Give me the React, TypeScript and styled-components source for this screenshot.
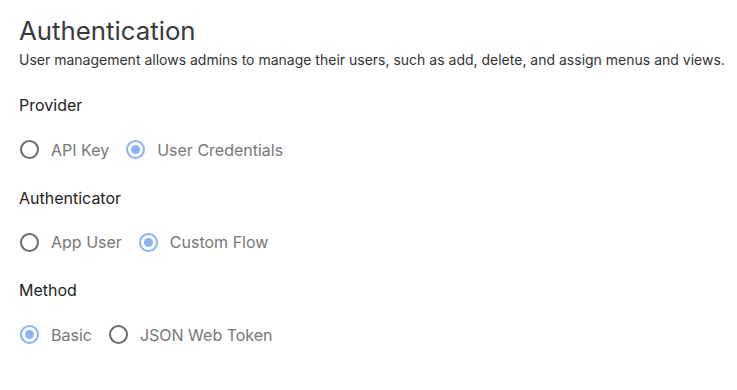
import React, { useState } from "react";
import styled, { createGlobalStyle } from "styled-components";

const Global = createGlobalStyle`
  body { margin: 0; background: #fff; font-family: Inter, "Noto Sans", sans-serif; }
`;

const Page = styled.div`
  padding: 16px 19px;
  display: flex;
  flex-direction: column;
`;

const Title = styled.h1`
  margin: 0;
  font-size: 25.8px;
  line-height: 30px;
  font-weight: 400;
  color: #3a3a3a;
`;

const Desc = styled.p`
  margin: 5px 0 0;
  font-size: 14px;
  line-height: 18px;
  color: #333;
  white-space: nowrap;
`;

const Sections = styled.div`
  display: flex;
  flex-direction: column;
  gap: 28px;
  margin-top: 26px;
`;

const Section = styled.div`
  display: flex;
  flex-direction: column;
`;

const Label = styled.div`
  font-size: 16px;
  line-height: 20px;
  color: #222;
`;

const Options = styled.div`
  display: flex;
  gap: 16px;
  margin-top: 24.5px;
`;

const Option = styled.label`
  display: flex;
  align-items: center;
  gap: 12px;
  cursor: pointer;
  font-size: 16px;
  line-height: 20px;
  color: #777;
`;

const Circle = styled.span<{ $on: boolean }>`
  width: 19px;
  height: 19px;
  margin-left: 1px;
  box-sizing: border-box;
  border-radius: 50%;
  border: 2px solid ${(p) => (p.$on ? "#8ab4f8" : "#6b6b6b")};
  display: flex;
  align-items: center;
  justify-content: center;
  &::after {
    content: "";
    width: 9px;
    height: 9px;
    border-radius: 50%;
    background: ${(p) => (p.$on ? "#8ab4f8" : "transparent")};
  }
`;

type Group = { label: string; options: string[]; initial: string };

const groups: Group[] = [
  { label: "Provider", options: ["API Key", "User Credentials"], initial: "User Credentials" },
  { label: "Authenticator", options: ["App User", "Custom Flow"], initial: "Custom Flow" },
  { label: "Method", options: ["Basic", "JSON Web Token"], initial: "Basic" },
];

function RadioGroup({ g }: { g: Group }) {
  const [value, setValue] = useState(g.initial);
  return (
    <Section>
      <Label>{g.label}</Label>
      <Options>
        {g.options.map((o) => (
          <Option key={o} onClick={() => setValue(o)}>
            <Circle $on={value === o} />
            {o}
          </Option>
        ))}
      </Options>
    </Section>
  );
}

export default function App() {
  return (
    <>
      <Global />
      <Page>
        <Title>Authentication</Title>
        <Desc>
          User management allows admins to manage their users, such as add, delete, and assign menus and views.
        </Desc>
        <Sections>
          {groups.map((g) => (
            <RadioGroup key={g.label} g={g} />
          ))}
        </Sections>
      </Page>
    </>
  );
}
